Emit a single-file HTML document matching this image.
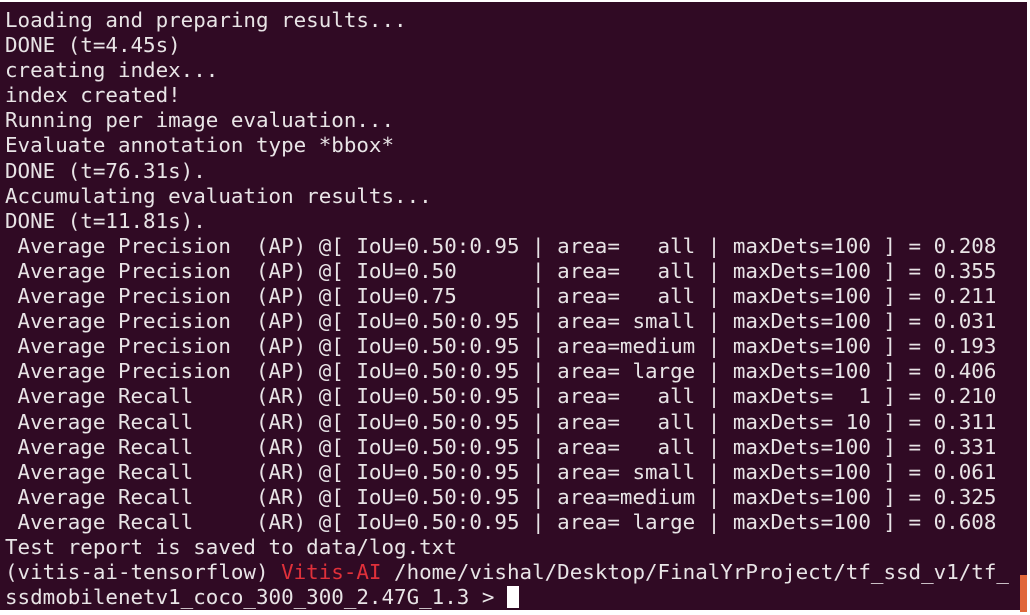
<!DOCTYPE html>
<html><head><meta charset="utf-8"><style>
html,body{margin:0;padding:0;background:#fff;width:1030px;height:615px;overflow:hidden}
#t{position:absolute;left:0;top:2px;width:1027px;height:608px;background:#300a24}
pre{position:absolute;left:5px;top:6px;margin:0;font-family:"DejaVu Sans Mono","Liberation Mono",monospace;font-size:20.85px;line-height:25.1px;color:#e8e4e6;white-space:pre}
.r{color:#e0303a}
.c{display:inline-block;width:12px;height:22px;background:#fff;vertical-align:-4px}
#bar{position:absolute;left:1020px;top:573px;width:7px;height:37px;background:#e0683a}
</style></head><body><div id="t"><pre>Loading and preparing results...
DONE (t=4.45s)
creating index...
index created!
Running per image evaluation...
Evaluate annotation type *bbox*
DONE (t=76.31s).
Accumulating evaluation results...
DONE (t=11.81s).
 Average Precision  (AP) @[ IoU=0.50:0.95 | area=   all | maxDets=100 ] = 0.208
 Average Precision  (AP) @[ IoU=0.50      | area=   all | maxDets=100 ] = 0.355
 Average Precision  (AP) @[ IoU=0.75      | area=   all | maxDets=100 ] = 0.211
 Average Precision  (AP) @[ IoU=0.50:0.95 | area= small | maxDets=100 ] = 0.031
 Average Precision  (AP) @[ IoU=0.50:0.95 | area=medium | maxDets=100 ] = 0.193
 Average Precision  (AP) @[ IoU=0.50:0.95 | area= large | maxDets=100 ] = 0.406
 Average Recall     (AR) @[ IoU=0.50:0.95 | area=   all | maxDets=  1 ] = 0.210
 Average Recall     (AR) @[ IoU=0.50:0.95 | area=   all | maxDets= 10 ] = 0.311
 Average Recall     (AR) @[ IoU=0.50:0.95 | area=   all | maxDets=100 ] = 0.331
 Average Recall     (AR) @[ IoU=0.50:0.95 | area= small | maxDets=100 ] = 0.061
 Average Recall     (AR) @[ IoU=0.50:0.95 | area=medium | maxDets=100 ] = 0.325
 Average Recall     (AR) @[ IoU=0.50:0.95 | area= large | maxDets=100 ] = 0.608
Test report is saved to data/log.txt
(vitis-ai-tensorflow) <span class="r">Vitis-AI</span> /home/vishal/Desktop/FinalYrProject/tf_ssd_v1/tf_
ssdmobilenetv1_coco_300_300_2.47G_1.3 &gt; <span class="c"></span></pre><div id="bar"></div></div></body></html>
